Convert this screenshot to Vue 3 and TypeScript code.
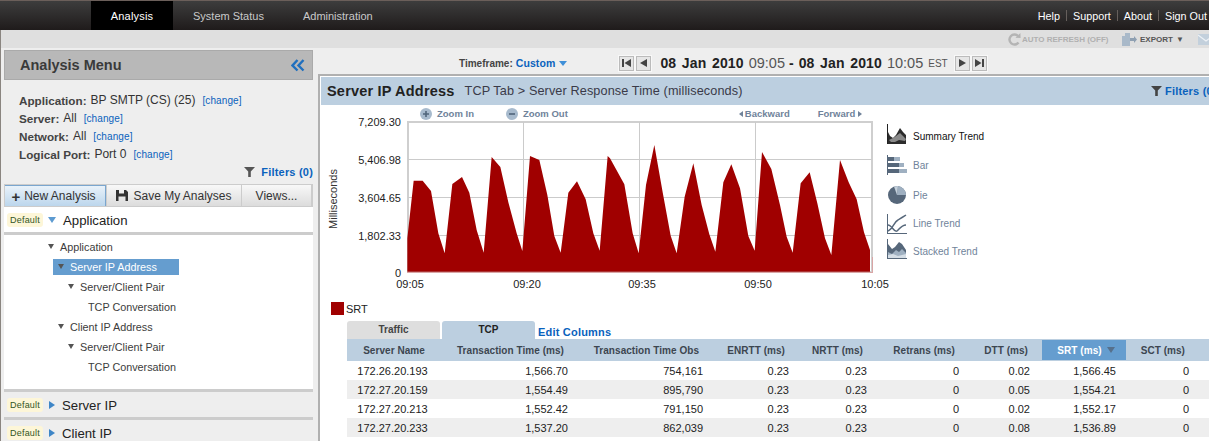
<script setup lang="ts">
type Pt = [number, number]
const a: Pt[] = [[262,500],[262,400],[281,227],[308,227],[333,258],[355,385],[374,445],[397,237],[426,216],[448,263],[470,375],[491,443],[515,156],[541,186],[565,292],[590,385],[607,438],[630,153],[658,165],[682,270],[703,393],[722,443],[745,263],[771,229],[797,283],[820,385],[839,437],[863,153]]
const b: Pt[] = [[0,160],[43,238],[68,385],[86,445],[108,240],[133,120],[158,262],[182,392],[200,445],[224,275],[250,175],[275,300],[298,388],[316,440],[340,232],[364,178],[390,250],[415,393],[434,437],[456,141],[484,192],[510,300],[530,395],[548,443],[572,235],[599,202],[622,295],[645,400],[664,450],[690,165],[716,232],[740,283],[762,382],[780,435],[780,500]]
const area = [
  ...a.map(([x, y]) => `${320 + x / 3},${105 + y / 3}`),
  ...b.map(([x, y]) => `${610 + x / 3},${105 + y / 3}`)
].join(' ')

const yLabels = [
  { t: '7,209.30', y: 126 },
  { t: '5,406.98', y: 164 },
  { t: '3,604.65', y: 202 },
  { t: '1,802.33', y: 240 },
  { t: '0', y: 277 }
]
const xLabels = [
  { t: '09:05', x: 410 },
  { t: '09:20', x: 527 },
  { t: '09:35', x: 642 },
  { t: '09:50', x: 758 },
  { t: '10:05', x: 875 }
]
const info = [
  { k: 'Application:', v: 'BP SMTP (CS) (25)' },
  { k: 'Server:', v: 'All' },
  { k: 'Network:', v: 'All' },
  { k: 'Logical Port:', v: 'Port 0' }
]
const tree = [
  { t: 'Application', l: 'l0', arrow: true },
  { t: 'Server IP Address', l: 'l1 sel', arrow: true },
  { t: 'Server/Client Pair', l: 'l2', arrow: true },
  { t: 'TCP Conversation', l: 'l3', arrow: false },
  { t: 'Client IP Address', l: 'l1', arrow: true },
  { t: 'Server/Client Pair', l: 'l2', arrow: true },
  { t: 'TCP Conversation', l: 'l3', arrow: false }
]
const cols = ['Transaction Time (ms)', 'Transaction Time Obs', 'ENRTT (ms)', 'NRTT (ms)', 'Retrans (ms)', 'DTT (ms)']
const rows = [
  ['172.26.20.193', '1,566.70', '754,161', '0.23', '0.23', '0', '0.02', '1,566.45', '0'],
  ['172.27.20.159', '1,554.49', '895,790', '0.23', '0.23', '0', '0.05', '1,554.21', '0'],
  ['172.27.20.213', '1,552.42', '791,150', '0.23', '0.23', '0', '0.02', '1,552.17', '0'],
  ['172.27.20.233', '1,537.20', '862,039', '0.23', '0.23', '0', '0.08', '1,536.89', '0']
]
const widths = [91, 140, 135, 86, 78, 92, 73, 84, 73, 10]
</script>

<template>
  <div class="page">
    <header class="nav">
      <a class="nav-item active">Analysis</a>
      <a class="nav-item status">System Status</a>
      <a class="nav-item admin">Administration</a>
      <div class="nav-links">
        <a>Help</a><i></i><a>Support</a><i></i><a>About</a><i></i><a>Sign Out</a>
      </div>
    </header>

    <div class="toolbar">
      <svg class="tb-refresh" width="13" height="13" viewBox="0 0 13 13">
        <path d="M10.500 9.500A5 5 0 1 1 10 3" fill="none" stroke="#b4b4b4" stroke-width="2.400" />
        <path d="M7.500 4.800 12.600 5 12.400 0Z" fill="#b4b4b4" />
      </svg>
      <span class="tb-off">AUTO REFRESH (OFF)</span>
      <svg class="tb-export" width="15" height="13" viewBox="0 0 15 13">
        <path d="M0 3h3V0h5v5h3v3H8v5H0Z" fill="#a9b9c9" />
        <path d="M8 5h4V3l3 3.500L12 10V8H8Z" fill="#8fa0b2" />
      </svg>
      <span class="tb-on">EXPORT</span>
      <span class="tb-caret">▼</span>
      <svg class="tb-mail" width="16" height="11" viewBox="0 0 16 11">
        <rect width="16" height="11" fill="#c3d0dc" />
        <path d="M0 1l8 6 8-6" fill="none" stroke="#eef2f6" stroke-width="1.200" />
      </svg>
    </div>

    <div class="main">
      <aside class="side">
        <div class="menu-head">
          <span>Analysis Menu</span>
          <svg width="14" height="13" viewBox="0 0 14 13">
            <path d="M6.500 1 1.500 6.500l5 5M12.500 1l-5 5.500 5 5" fill="none" stroke="#1f6fbe" stroke-width="2.400" />
          </svg>
        </div>
        <div class="info">
          <div v-for="r in info" :key="r.k" class="info-row">
            <b>{{ r.k }}</b><span>{{ r.v }}</span><a>[change]</a>
          </div>
          <div class="side-filter">
            <svg width="11" height="10" viewBox="0 0 11 10"><path d="M0 0h11L6.800 4.500V10H4.200V4.500Z" fill="#555" /></svg>
            <a>Filters (0)</a>
          </div>
        </div>
        <div class="btns">
          <button class="btn new"><span class="plus">+</span> New Analysis</button>
          <button class="btn save">
            <svg width="12" height="11" viewBox="0 0 12 11"><path d="M0 0h10l2 2v9H0ZM3 0v3.500h5V0ZM2.500 6.500V11h7V6.500Z" fill="#333" fill-rule="evenodd" /></svg>
            Save My Analyses
          </button>
          <button class="btn views">Views...</button>
        </div>

        <div class="acc white">
          <span class="badge">Default</span><span class="tri down"></span><span class="acc-t">Application</span>
        </div>
        <div class="tree">
          <div v-for="(n, i) in tree" :key="i" class="tree-row" :class="n.l">
            <div class="tree-in"><span v-if="n.arrow" class="tri-d"></span><span>{{ n.t }}</span></div>
          </div>
        </div>
        <div class="acc">
          <span class="badge">Default</span><span class="tri right"></span><span class="acc-t">Server IP</span>
        </div>
        <div class="acc">
          <span class="badge">Default</span><span class="tri right"></span><span class="acc-t">Client IP</span>
        </div>
      </aside>

      <section class="content">
        <div class="timebar">
          <span class="tf">Timeframe:</span>
          <a class="tf-v">Custom</a><span class="tf-caret"></span>
          <div class="pager first">
            <button class="pg"><svg width="9" height="8" viewBox="0 0 9 8"><path d="M0 0h2v8H0ZM9 0v8L2.500 4Z" fill="#444" /></svg></button>
            <button class="pg"><svg width="7" height="8" viewBox="0 0 7 8"><path d="M7 0v8L0 4Z" fill="#444" /></svg></button>
          </div>
          <b class="date">08 Jan 2010</b><span class="time">09:05</span><b class="dash">-</b>
          <b class="date d2">08 Jan 2010</b><span class="time">10:05</span><span class="est">EST</span>
          <div class="pager">
            <button class="pg"><svg width="7" height="8" viewBox="0 0 7 8"><path d="M0 0v8l7-4Z" fill="#444" /></svg></button>
            <button class="pg"><svg width="9" height="8" viewBox="0 0 9 8"><path d="M7 0h2v8H7ZM0 0v8l6.500-4Z" fill="#444" /></svg></button>
          </div>
        </div>

        <div class="panel">
          <div class="panel-head">
            <b>Server IP Address</b>
            <span class="sub">TCP Tab &gt; Server Response Time (milliseconds)</span>
            <div class="head-filter">
              <svg width="11" height="10" viewBox="0 0 11 10"><path d="M0 0h11L6.800 4.500V10H4.200V4.500Z" fill="#444" /></svg>
              <a>Filters (0)</a>
            </div>
          </div>

          <div class="zoombar">
            <svg class="zi" width="12" height="12" viewBox="0 0 12 12"><circle cx="6" cy="6" r="6" fill="#a7bacd" /><path d="M3 6h6M6 3v6" stroke="#50657b" stroke-width="1.600" /></svg>
            <span class="zt">Zoom In</span>
            <svg class="zo" width="12" height="12" viewBox="0 0 12 12"><circle cx="6" cy="6" r="6" fill="#a7bacd" /><path d="M3 6h6" stroke="#50657b" stroke-width="1.600" /></svg>
            <span class="zt">Zoom Out</span>
            <span class="zt back"><em class="sm-l"></em>Backward</span>
            <span class="zt fwd">Forward<em class="sm-r"></em></span>
          </div>

          <div class="chart-row">
            <svg class="chart" width="562" height="175" viewBox="321 118 562 175">
              <rect x="408" y="122" width="464" height="150" fill="#fff" stroke="#cfcfcf" stroke-width="2" />
              <path d="M408 159.500H872M408 197.500H872M408 235.500H872M523.500 122V272M639.500 122V272M755.500 122V272" stroke="#cbcbcb" fill="none" />
              <polygon :points="area" fill="#a00000" />
              <path d="M407 272.500H873M872.500 257V272" stroke="#d9a5a5" fill="none" />
              <text v-for="l in yLabels" :key="l.t" x="401" :y="l.y" text-anchor="end" class="ax">{{ l.t }}</text>
              <text v-for="l in xLabels" :key="l.x" :x="l.x" y="288" text-anchor="middle" class="ax">{{ l.t }}</text>
              <text x="337" y="199" text-anchor="middle" transform="rotate(-90 337 199)" class="ax2">Milliseconds</text>
            </svg>

            <ul class="types">
              <li class="t-sum">
                <svg width="20" height="20" viewBox="0 0 20 20">
                  <path d="M.500 0v20" stroke="#222" /><path d="M1 20V8l2 4 3 2 3-3 4-7 3 4 3 3v9Z" fill="#2c2c2c" /><path d="M2 16l4-2 3-2 4-3 3 3 3 3-1 2-6-1-4 2H4Z" fill="#8a8a8a" />
                </svg>
                <span>Summary Trend</span>
              </li>
              <li class="t-bar">
                <svg width="20" height="20" viewBox="0 0 20 20">
                  <path d="M.500 0v20" stroke="#56677a" /><path d="M1 2h6v4H1ZM1 8h11v4H1ZM1 14h11v4H1Z" fill="#56677a" /><path d="M7 2h6v4H7ZM12 8h5v4h-5ZM12 14h8v4h-8Z" fill="#9fb0c1" />
                </svg>
                <span>Bar</span>
              </li>
              <li class="t-pie">
                <svg width="20" height="20" viewBox="0 0 20 20">
                  <circle cx="10" cy="10" r="9" fill="#56677a" /><path d="M10 10 11 1a9 9 0 0 1 8 9Z" fill="#9fb0c1" /><path d="M10 10 7 1.500 11 1Z" fill="#c5d1dc" />
                </svg>
                <span>Pie</span>
              </li>
              <li class="t-line">
                <svg width="20" height="20" viewBox="0 0 20 20">
                  <path d="M.500 0v20M0 19.500h20" stroke="#56677a" /><path d="M1 17c5-2 6-9 10-11 3-2 5-3 8-5M1 11c4 0 6 8 9 6 3-3 5-6 9-6" fill="none" stroke="#56677a" stroke-width="1.500" />
                </svg>
                <span>Line Trend</span>
              </li>
              <li class="t-stack">
                <svg width="20" height="20" viewBox="0 0 20 20">
                  <path d="M.500 0v20M0 19.500h20" stroke="#56677a" /><path d="M1 19V5l4 5 3-2 4-5 3 2 4 6v8Z" fill="#56677a" /><path d="M1 19v-6l4 2 4-4 3 2 3-3 4 4v5Z" fill="#9fb0c1" /><path d="M1 19v-3l5-1 5 2 8-2v4Z" fill="#d5dee6" />
                </svg>
                <span>Stacked Trend</span>
              </li>
            </ul>
          </div>

          <div class="legend"><i></i><span>SRT</span></div>

          <div class="tabs">
            <div class="tab">Traffic</div>
            <div class="tab on">TCP</div>
            <a class="edit">Edit Columns</a>
          </div>

          <table class="grid">
            <colgroup>
              <col v-for="(w, i) in widths" :key="i" :style="{ width: w + 'px' }" />
            </colgroup>
            <thead>
              <tr>
                <th class="first">Server Name</th>
                <th v-for="c in cols" :key="c">{{ c }}</th>
                <th class="sorted"><div>SRT (ms)<i></i></div></th>
                <th>SCT (ms)</th>
                <th></th>
              </tr>
            </thead>
            <tbody>
              <tr v-for="r in rows" :key="r[0]">
                <td v-for="(c, i) in r" :key="i" :class="{ first: i === 0 }">{{ c }}</td>
                <td></td>
              </tr>
            </tbody>
          </table>
        </div>
      </section>
    </div>
  </div>
</template>

<style>
html, body { margin: 0; background: #eee; }
</style>

<style scoped>
.page { width: 1209px; height: 441px; overflow: hidden; display: flex; flex-direction: column; font-family: "Liberation Sans", Arial, sans-serif; color: #333; background: #eee; }
a { color: #0a62bd; }
.nav { height: 30px; flex: none; box-sizing: border-box; border-top: 1px solid #6b5f5a; padding-left: 91px; display: flex; background: linear-gradient(#3d3d3d, #1f1b1b); font-size: 11px; color: #cfcfcf; white-space: nowrap; }
.nav-item { width: 82px; display: flex; align-items: center; justify-content: center; color: #c9c9c9; }
.nav-item.status { width: auto; margin-left: 20px; }
.nav-item.admin { width: auto; margin-left: 39px; }
.nav-item.active { background: #000; color: #fff; letter-spacing: .2px; }
.nav-links { margin-left: auto; padding-right: 2px; display: flex; align-items: center; font-size: 10.800px; }
.nav-links a { color: #fff; }
.nav-links i { width: 1px; height: 11px; background: #665f5c; margin: 0 6px; }

.toolbar { height: 18px; flex: none; box-sizing: border-box; border-left: 1px solid #8a8580; background: #dfdfdf; display: flex; align-items: center; padding-left: 1007px; font-size: 8px; font-weight: bold; white-space: nowrap; }
.tb-off { color: #b0b0b0; margin-left: 1px; width: 100px; flex: none; }
.tb-on { color: #555; margin-left: 3px; }
.tb-caret { color: #555; margin-left: 3px; font-size: 8px; }
.tb-mail { margin-left: 14px; flex: none; }
.tb-refresh, .tb-export { flex: none; }

.main { display: flex; flex: 1; min-height: 0; border-left: 1px solid #8a8580; }
.side { width: 309px; margin-left: 3px; padding-top: 2px; flex: none; background: #eee; position: relative; }
.menu-head { height: 30px; box-sizing: border-box; background: #b8b8b8; border: 1px solid #aaa; display: flex; align-items: center; justify-content: space-between; padding: 0 7px 0 15px; font-size: 14.500px; font-weight: bold; color: #3a3a3a; }
.info { height: 104px; box-sizing: border-box; padding: 11px 0 0 15px; font-size: 12px; }
.info-row { height: 18px; display: flex; align-items: center; white-space: nowrap; }
.info-row b { color: #444; margin-right: 4px; font-size: 11.700px; }
.info-row a { font-size: 10px; margin-left: 7px; letter-spacing: .1px; }
.side-filter { display: flex; justify-content: flex-end; align-items: center; gap: 6px; font-size: 11px; font-weight: bold; height: 18px; letter-spacing: .2px; }

.btns { height: 23px; display: flex; box-sizing: border-box; background: #ccc; padding: 1px; gap: 1px; }
.btn { border: 0; font: inherit; font-size: 12px; color: #333; padding: 0; background: linear-gradient(#f8f8f8, #dcdcdc); display: flex; align-items: center; justify-content: center; gap: 5px; white-space: nowrap; }
.new { width: 101px; background: linear-gradient(#e9f2fa, #bcd6ec); border-right: 1px solid #7aa6cf; border-top: 1px solid #7aa6cf; gap: 4px; padding-right: 3px; }
.plus { font-weight: bold; font-size: 15px; line-height: 1; }
.save { width: 134px; }
.views { width: 69px; }

.acc { height: 25px; background: #eee; display: flex; align-items: center; padding-left: 3px; border-top: 3px solid #ccc; }
.acc.white { background: #fff; border-top: 0; border-bottom: 3px solid #ccc; }
.badge { width: 36px; height: 14px; line-height: 14px; text-align: center; background: #fdf6d8; border-radius: 3px; font-size: 9px; color: #33551f; letter-spacing: .2px; }
.tri { width: 0; height: 0; margin-left: 5px; margin-right: 7px; }
.tri.down { border: 4px solid transparent; border-top: 6px solid #5d9bd1; border-bottom: 0; }
.tri.right { border: 4px solid transparent; border-left: 6px solid #3f86c7; border-right: 0; margin-left: 6px; margin-right: 7px; }
.acc-t { font-size: 13.200px; color: #222; padding-top: 2px; }

.tree { height: 154px; background: #fff; box-sizing: border-box; padding-top: 2px; }
.tree-row { height: 20px; font-size: 10.800px; color: #3c3c3c; display: flex; align-items: center; white-space: nowrap; }
.tree-in { display: flex; align-items: center; height: 16px; gap: 5px; }
.tri-d { width: 0; height: 0; border: 3.500px solid transparent; border-top: 5px solid #555; border-bottom: 0; margin-bottom: 1px; margin-right: 1px; }
.l0 .tree-in { margin-left: 44px; }
.l1 .tree-in { margin-left: 49px; padding-left: 5px; width: 126px; box-sizing: border-box; }
.l2 .tree-in { margin-left: 64px; }
.l3 .tree-in { margin-left: 84px; }
.sel .tree-in { background: #659dcf; color: #fff; }

.content { flex: 1; min-width: 0; padding-left: 5px; }
.timebar { height: 26px; display: flex; align-items: center; white-space: nowrap; padding-left: 146px; margin-left: -5px; box-sizing: border-box; padding-top: 4px; }
.tf { font-size: 10px; font-weight: bold; color: #444; }
.tf-v { font-size: 10.500px; font-weight: bold; margin-left: 3px; letter-spacing: .1px; }
.tf-caret { width: 0; height: 0; border: 4px solid transparent; border-top: 5px solid #3f8fd8; border-bottom: 0; margin-left: 4px; }
.pager { display: flex; gap: 2px; margin-left: 7px; }
.pager.first { margin-left: 52px; margin-right: 9px; }
.pg { width: 15px; height: 15px; padding: 0; border: 1px solid #bbb; background: #e6e6e6; display: flex; align-items: center; justify-content: center; box-shadow: 0 0 0 1px #f8f8f8; }
.date { font-size: 14px; color: #222; word-spacing: 1.500px; letter-spacing: .15px; }
.time { font-size: 14.500px; margin-left: 5px; color: #555; }
.dash { font-size: 14px; margin-left: 4px; color: #222; }
.d2 { margin-left: 5px; }
.est { font-size: 10px; margin-left: 5px; color: #555; }

.panel { height: 367px; box-sizing: border-box; overflow: hidden; background: #fff; border-top: 2px solid #b0b0b0; border-left: 2px solid #b0b0b0; padding: 1px 0 0 1px; }
.panel-head { height: 28px; background: #bccfe0; display: flex; align-items: center; padding-left: 6px; white-space: nowrap; }
.panel-head b { font-size: 14.500px; color: #222; letter-spacing: .2px; }
.sub { font-size: 12.700px; margin-left: 10px; color: #3a3a48; letter-spacing: .1px; }
.head-filter { margin-left: auto; display: flex; align-items: center; gap: 3px; font-size: 11px; font-weight: bold; width: 58px; flex: none; letter-spacing: .2px; }
.head-filter svg { flex: none; }

.zoombar { height: 13px; display: flex; align-items: center; font-size: 9.500px; font-weight: bold; color: #70839a; white-space: nowrap; position: relative; top: 2px; }
.zi { margin-left: 99px; flex: none; }
.zo { margin-left: 32px; flex: none; }
.zt { margin-left: 5px; }
.back { margin-left: 171px; }
.fwd { margin-left: 28px; }
.sm-l, .sm-r { display: inline-block; width: 0; height: 0; border: 3px solid transparent; }
.sm-l { border-right: 4px solid #70839a; border-left: 0; margin-right: 2px; }
.sm-r { border-left: 4px solid #70839a; border-right: 0; margin-left: 3px; }

.chart-row { display: flex; height: 175px; }
.chart { flex: none; display: block; overflow: visible; }
.ax { font-size: 11px; fill: #222; font-family: "Liberation Sans", Arial, sans-serif; }
.ax2 { font-size: 11px; fill: #333; font-family: "Liberation Sans", Arial, sans-serif; }
.types { list-style: none; margin: 4px 0 0; padding: 0 0 0 4px; font-size: 10px; color: #70839a; }
.types li { display: flex; align-items: center; gap: 6px; white-space: nowrap; }
.t-sum { height: 28px; color: #111; }
.t-sum svg, .t-stack svg { margin-bottom: 4px; }
.t-bar { height: 30px; }
.t-pie { height: 30px; }
.t-line { height: 27px; }
.t-stack { height: 28px; }
.types svg { flex: none; }

.legend { display: flex; align-items: center; gap: 2px; height: 13px; margin: 9px 0 0 10px; font-size: 11px; color: #222; }
.legend i { width: 13px; height: 13px; background: #a00000; }

.tabs { display: flex; margin: 6px 0 0 26px; height: 18px; align-items: flex-end; }
.tab { width: 93px; height: 18px; line-height: 18px; text-align: center; background: #dedede; border-radius: 3px 3px 0 0; font-size: 10px; font-weight: bold; color: #444; margin-right: 2px; }
.tab.on { background: #bccfe0; color: #222; }
.edit { font-size: 11px; font-weight: bold; margin-left: 1px; line-height: 14px; letter-spacing: .2px; }

.grid { margin-left: 26px; border-collapse: collapse; table-layout: fixed; width: 862px; font-size: 11px; }
.grid th { height: 22px; padding: 0 14px 0 0; background: #bccfe0; color: #3c4650; font-size: 10px; text-align: right; white-space: nowrap; letter-spacing: .05px; }
.grid td { height: 19px; padding: 0 10px 0 0; text-align: right; color: #222; white-space: nowrap; }
.grid tbody tr:nth-child(even) td { background: #eee; }
.grid .first { text-align: center; padding: 0; }
.grid th.first { padding-left: 3px; }
.grid td:nth-child(7) { padding-right: 12px; }
.grid th.sorted { padding: 1px 0; height: 20px; }
.sorted div { height: 20px; background: #659dcf; color: #fff; display: flex; align-items: center; justify-content: center; gap: 5px; padding-left: 4px; }
.sorted i { width: 0; height: 0; border: 4px solid transparent; border-top: 6px solid #56708c; border-bottom: 0; }
</style>
